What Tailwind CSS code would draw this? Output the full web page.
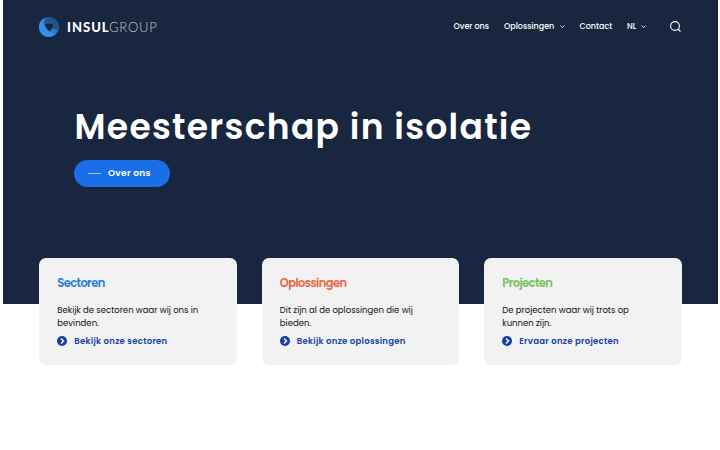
<!DOCTYPE html>
<html lang="nl">
  <head>
    <meta charset="UTF-8" />
    <meta name="viewport" content="width=device-width, initial-scale=1.0" />
    <title>Insulgroup</title>
    <script src="https://cdn.jsdelivr.net/npm/@tailwindcss/browser@4"></script>
  </head>
  <body class="bg-white h-[450px] overflow-hidden font-['Poppins','Inter',sans-serif]">
    <!-- Hero -->
    <section class="ml-[3px] mr-[2.5px] h-[304px] bg-[#19263f] text-white">
      <header class="flex h-[53px] items-center justify-between pl-9 pr-[37px]">
        <a href="#" class="flex items-center">
          <svg class="size-5" viewBox="0 0 20 20">
            <circle cx="10" cy="10" r="10" fill="#2478cf" />
            <path d="M10 0A10 10 0 0 1 19.6 12.8L13.5 11.5L15 7L5 6.5Q5.5 1.5 10 0Z" fill="#24528c" />
            <path d="M5.5 1Q3 6 6 10.5Q9 15.5 17 17A10 10 0 1 1 5.5 1Z" fill="#3790e6" />
            <path d="M6 7.3Q10 5.8 14.5 7.3Q14 12 10.5 14Q6.5 11.5 6 7.3Z" fill="#19263f" />
          </svg>
          <span class="ml-[8px] flex whitespace-nowrap font-['Lato',sans-serif] text-[13px] leading-5">
            <span class="w-[42px] font-black tracking-[1px]">INSUL</span>
            <span class="font-light tracking-[0.75px] text-[#c5cad3]">GROUP</span>
          </span>
        </a>
        <nav class="flex items-center whitespace-nowrap text-[8px] font-medium">
          <a href="#" class="w-[50.5px]">Over ons</a>
          <a href="#" class="flex w-[75.5px] items-center justify-between pr-[15px]">Oplossingen
            <svg class="h-[3.5px] w-[5px]" viewBox="0 0 6 4" fill="none" stroke="currentColor"><path d="M.5.5 3 3 5.5.5" /></svg>
          </a>
          <a href="#" class="w-[47.5px]">Contact</a>
          <a href="#" class="flex w-[42.5px] items-center gap-[5px]">NL
            <svg class="h-[3.5px] w-[5px]" viewBox="0 0 6 4" fill="none" stroke="currentColor"><path d="M.5.5 3 3 5.5.5" /></svg>
          </a>
          <svg class="size-[11px]" viewBox="0 0 11 11" fill="none" stroke="currentColor" stroke-width="1.1"><circle cx="5" cy="5" r="4.4" /><path d="m8 8 2.5 2.5" /></svg>
        </nav>
      </header>
      <div class="pl-[71.5px] pt-[52px]">
        <h1 class="h-[54.5px] whitespace-nowrap text-[34.5px] font-semibold leading-[44px] tracking-[1.3px]">Meesterschap in isolatie</h1>
        <a href="#" class="-ml-[0.5px] flex h-[27.5px] w-[95.5px] items-center rounded-full bg-[#1a6fe8] pl-[14px] text-[9px] font-semibold tracking-[0.3px]">
          <span class="mr-[7px] h-px w-[13px] bg-white/60"></span>Over ons
        </a>
      </div>
    </section>

    <!-- Cards -->
    <section class="relative -mt-[46.5px] ml-[39px] grid w-[642.5px] grid-cols-3 gap-[25px] text-[8.5px] leading-[13px] text-[#111111]">
      <article class="h-[107.5px] whitespace-nowrap rounded-[7px] bg-[#f2f2f2] pl-[18.3px] pt-[17px]">
        <h2 class="text-[11.5px] font-semibold leading-4 tracking-[-0.6px] text-[#267bd5]">Sectoren</h2>
        <p class="mt-[13px]">Bekijk de sectoren waar wij ons in<br />bevinden.</p>
        <a href="#" class="mt-[5px] flex items-center font-semibold tracking-[0.27px] text-[#153fa6]">
          <svg class="mr-[7px] size-[10px]" viewBox="0 0 10 10"><circle cx="5" cy="5" r="5" fill="currentColor" /><path d="m4 2.5 2.5 2.5L4 7.5" fill="none" stroke="#f2f2f2" stroke-width="1.6" /></svg>
          <span>Bekijk onze sectoren</span>
        </a>
      </article>
      <article class="h-[107.5px] whitespace-nowrap rounded-[7px] bg-[#f2f2f2] pl-[18.3px] pt-[17px]">
        <h2 class="text-[11.5px] font-semibold leading-4 tracking-[-0.6px] text-[#ec6544]">Oplossingen</h2>
        <p class="mt-[13px]">Dit zijn al de oplossingen die wij<br />bieden.</p>
        <a href="#" class="mt-[5px] flex items-center font-semibold tracking-[0.27px] text-[#153fa6]">
          <svg class="mr-[7px] size-[10px]" viewBox="0 0 10 10"><circle cx="5" cy="5" r="5" fill="currentColor" /><path d="m4 2.5 2.5 2.5L4 7.5" fill="none" stroke="#f2f2f2" stroke-width="1.6" /></svg>
          <span>Bekijk onze oplossingen</span>
        </a>
      </article>
      <article class="h-[107.5px] whitespace-nowrap rounded-[7px] bg-[#f2f2f2] pl-[18.3px] pt-[17px]">
        <h2 class="text-[11.5px] font-semibold leading-4 tracking-[-0.6px] text-[#76c15c]">Projecten</h2>
        <p class="mt-[13px]">De projecten waar wij trots op<br />kunnen zijn.</p>
        <a href="#" class="mt-[5px] flex items-center font-semibold tracking-[0.27px] text-[#153fa6]">
          <svg class="mr-[7px] size-[10px]" viewBox="0 0 10 10"><circle cx="5" cy="5" r="5" fill="currentColor" /><path d="m4 2.5 2.5 2.5L4 7.5" fill="none" stroke="#f2f2f2" stroke-width="1.6" /></svg>
          <span>Ervaar onze projecten</span>
        </a>
      </article>
    </section>
  </body>
</html>
